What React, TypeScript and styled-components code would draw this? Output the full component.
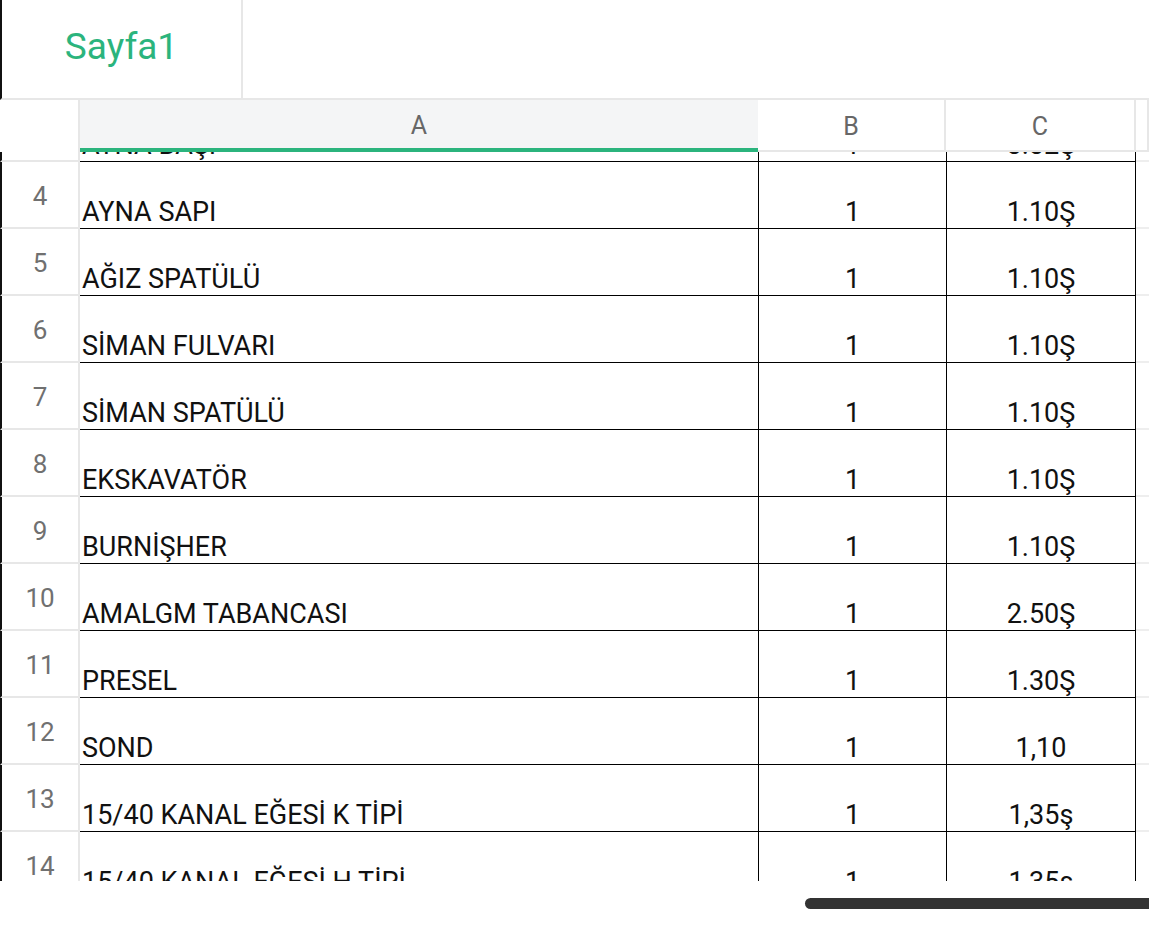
import React from "react";
import styled, { createGlobalStyle, css } from "styled-components";

const GlobalStyle = createGlobalStyle`
  html, body { margin: 0; padding: 0; background: #fff; }
  body { font-family: Roboto, "Noto Sans", "Liberation Sans", sans-serif; overflow: hidden; }
  * { box-sizing: border-box; }
`;

const COLS = "80px 678px 188px 190px 1fr";
const GREEN = "#2bb47d";
const GRID_GRAY = "#e7e7e7";

const Page = styled.div`
  width: 1149px;
  height: 926px;
  display: flex;
  flex-direction: column;
  overflow: hidden;
`;

const TabBar = styled.div`
  height: 100px;
  display: flex;
  border-left: 2px solid #111;
  border-bottom: 2px solid ${GRID_GRAY};
`;

const Tab = styled.div`
  width: 241px;
  display: flex;
  align-items: center;
  justify-content: center;
  border-right: 2px solid ${GRID_GRAY};
  color: ${GREEN};
  font-size: 37px;
  padding-bottom: 6px;
`;

const HeaderRow = styled.div`
  display: grid;
  grid-template-columns: ${COLS};
  height: 52px;
`;

const HeaderCell = styled.div<{ $selected?: boolean; $corner?: boolean }>`
  display: flex;
  align-items: center;
  justify-content: center;
  font-size: 25px;
  color: #676767;
  border-right: 2px solid ${GRID_GRAY};
  border-bottom: 2px solid ${GRID_GRAY};
  padding-top: 3px;
  ${(p) =>
    p.$selected &&
    css`
      background: #f4f5f6;
      border-bottom: 4px solid ${GREEN};
      border-right: none;
    `}
  ${(p) =>
    p.$corner &&
    css`
      border-bottom: none;
    `}
`;

const Viewport = styled.div`
  height: 729px;
  overflow: hidden;
`;

const Rows = styled.div<{ $offset: number }>`
  margin-top: ${(p) => -p.$offset}px;
`;

const Row = styled.div`
  display: grid;
  grid-template-columns: ${COLS};
  height: 67px;
`;

const RowNum = styled.div`
  display: flex;
  align-items: center;
  justify-content: center;
  font-size: 26px;
  color: #707070;
  border-left: 2px solid #111;
  border-right: 2px solid ${GRID_GRAY};
  border-bottom: 2px solid ${GRID_GRAY};
  padding-top: 2px;
`;

const Cell = styled.div<{ $align?: "left" | "center"; $left?: boolean; $right?: boolean }>`
  display: flex;
  align-items: flex-end;
  justify-content: ${(p) => (p.$align === "center" ? "center" : "flex-start")};
  padding: 0 2px 0 2px;
  font-size: 27px;
  line-height: 31px;
  color: #111;
  white-space: nowrap;
  overflow: hidden;
  border-bottom: 1px solid #000;
  ${(p) => p.$left && css`border-left: 1px solid #000;`}
  ${(p) => p.$right && css`border-right: 1px solid #000;`}
`;

const EmptyCell = styled.div`
  border-bottom: 2px solid #eeeeee;
`;

const Footer = styled.div`
  flex: 1;
  display: flex;
  justify-content: flex-end;
  align-items: flex-start;
  padding-top: 17px;
`;

const ScrollThumb = styled.div`
  width: 344px;
  height: 11px;
  background: #333;
  border-radius: 6px 0 0 6px;
`;

const data: [number, string, string, string][] = [
  [3, "AYNA BAŞI", "1", "3.32Ş"],
  [4, "AYNA SAPI", "1", "1.10Ş"],
  [5, "AĞIZ SPATÜLÜ", "1", "1.10Ş"],
  [6, "SİMAN FULVARI", "1", "1.10Ş"],
  [7, "SİMAN SPATÜLÜ", "1", "1.10Ş"],
  [8, "EKSKAVATÖR", "1", "1.10Ş"],
  [9, "BURNİŞHER", "1", "1.10Ş"],
  [10, "AMALGM TABANCASI", "1", "2.50Ş"],
  [11, "PRESEL", "1", "1.30Ş"],
  [12, "SOND", "1", "1,10"],
  [13, "15/40 KANAL EĞESİ K TİPİ", "1", "1,35ş"],
  [14, "15/40 KANAL EĞESİ H TİPİ", "1", "1,35ş"],
];

export default function App() {
  return (
    <>
      <GlobalStyle />
      <Page>
        <TabBar>
          <Tab>Sayfa1</Tab>
        </TabBar>
        <HeaderRow>
          <HeaderCell $corner />
          <HeaderCell $selected>A</HeaderCell>
          <HeaderCell>B</HeaderCell>
          <HeaderCell>C</HeaderCell>
          <HeaderCell />
        </HeaderRow>
        <Viewport>
          <Rows $offset={57}>
            {data.map(([n, a, b, c]) => (
              <Row key={n}>
                <RowNum>{n}</RowNum>
                <Cell>{a}</Cell>
                <Cell $align="center" $left>{b}</Cell>
                <Cell $align="center" $left $right>{c}</Cell>
                <EmptyCell />
              </Row>
            ))}
          </Rows>
        </Viewport>
        <Footer>
          <ScrollThumb />
        </Footer>
      </Page>
    </>
  );
}
